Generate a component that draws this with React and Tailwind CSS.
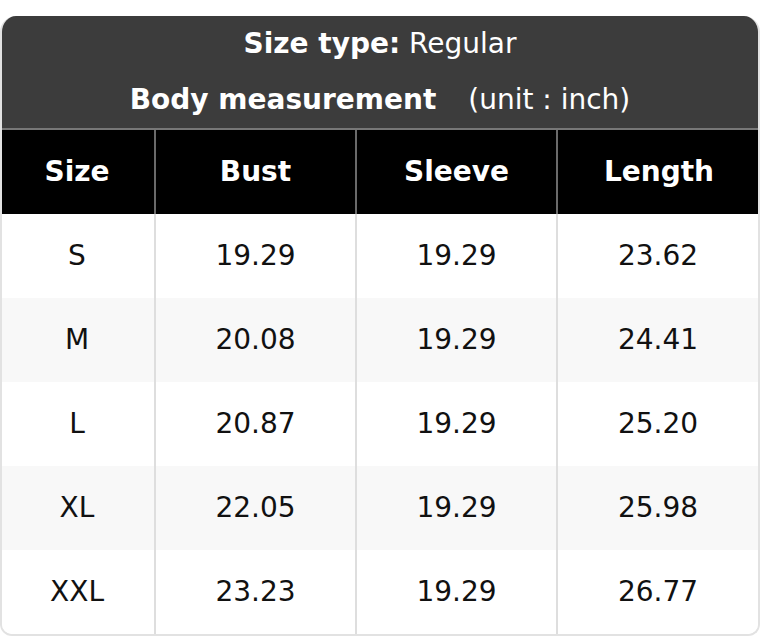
import React from "react";

const rows = [
  ["S", "19.29", "19.29", "23.62"],
  ["M", "20.08", "19.29", "24.41"],
  ["L", "20.87", "19.29", "25.20"],
  ["XL", "22.05", "19.29", "25.98"],
  ["XXL", "23.23", "19.29", "26.77"],
];

const cols = "grid grid-cols-[154px_201px_201px_1fr]";

const App = () => {
  return (
    <div className="bg-white pt-4 font-['DejaVu_Sans',sans-serif]">
      <div className="overflow-hidden rounded-t-[16px] rounded-b-[12px] border-x-2 border-b-2 border-[#e2e2e2]">
        {/* Titel */}
        <div className="-mx-[2px] bg-[#3c3c3c] text-white text-[28px]">
          <div className="h-[56px] flex items-center justify-center">
            <span className="font-bold">Size type:</span>
            <span>&nbsp;Regular</span>
          </div>
          <div className="h-[56px] flex items-center justify-center">
            <span className="font-bold">Body measurement</span>
            <span className="ml-[32px]">(unit : inch)</span>
          </div>
        </div>

        {/* Kopfzeile */}
        <div className={`${cols} -mx-[2px] border-t-2 border-[#777] bg-black text-white text-[28px] font-bold`}>
          {["Size", "Bust", "Sleeve", "Length"].map((h, i) => (
            <div
              key={h}
              className={`h-[84px] flex items-center justify-center ${i > 0 ? "border-l-2 border-[#6a6a6a]" : ""}`}
            >
              {h}
            </div>
          ))}
        </div>

        {/* Zeilen */}
        {rows.map((r, ri) => (
          <div
            key={r[0]}
            className={`${cols} -ml-[2px] text-[28px] text-[#111] ${ri % 2 ? "bg-[#f8f8f8]" : "bg-white"}`}
          >
            {r.map((c, i) => (
              <div
                key={i}
                className={`h-[84px] flex items-center justify-center ${i > 0 ? "border-l-2 border-[#dedede]" : ""}`}
              >
                {c}
              </div>
            ))}
          </div>
        ))}
      </div>
    </div>
  );
};

export default App;
